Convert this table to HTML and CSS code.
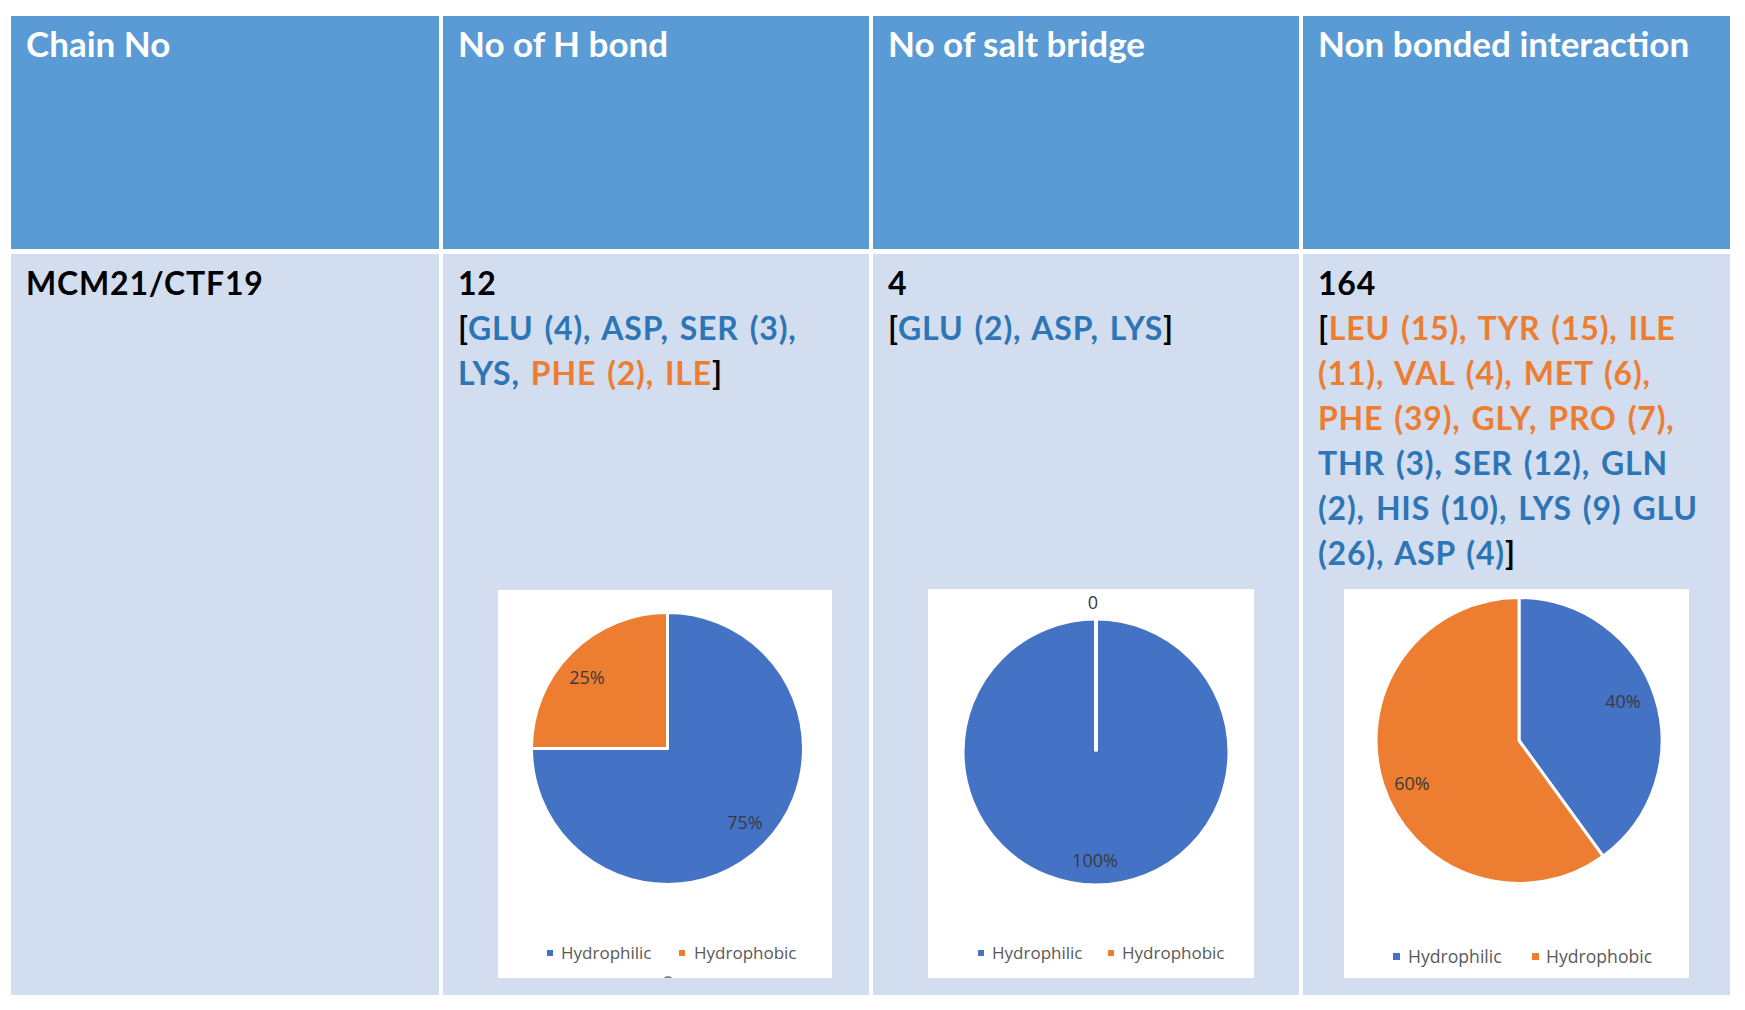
FILE: index.html
```html
<!DOCTYPE html>
<html lang="en">
<head>
<meta charset="utf-8">
<title>Chain interactions</title>
<link rel="stylesheet" href="styles.css">
</head>
<body>
<div class="table">
  <div class="cell head">Chain No</div>
  <div class="cell head">No of H bond</div>
  <div class="cell head">No of salt bridge</div>
  <div class="cell head">Non bonded interaction</div>

  <div class="cell body">
    <p class="cell-text">MCM21/CTF19</p>
  </div>

  <div class="cell body">
    <p class="cell-text">12<br>[<span class="philic">GLU (4), ASP, SER (3),</span><br><span class="philic">LYS,</span> <span class="phobic">PHE (2), ILE</span>]</p>
    <figure class="chart chart-hbond">
      <svg width="334" height="388" viewBox="0 0 334 388">
        <path class="slice-blue" d="M169.5 158.5 L169.5 22.5 A136 136 0 1 1 33.5 158.5 Z"/>
        <path class="slice-orange" d="M169.5 158.5 L33.5 158.5 A136 136 0 0 1 169.5 22.5 Z"/>
        <text class="label" x="89" y="94" text-anchor="middle">25%</text>
        <text class="label" x="247" y="239" text-anchor="middle">75%</text>
        <rect class="key-blue" x="49" y="360" width="6" height="6"/>
        <text class="legend" x="63" y="369">Hydrophilic</text>
        <rect class="key-orange" x="181" y="360" width="6" height="6"/>
        <text class="legend" x="196" y="369">Hydrophobic</text>
        <ellipse class="handle" cx="170" cy="390" rx="5" ry="4"/>
      </svg>
    </figure>
  </div>

  <div class="cell body">
    <p class="cell-text">4<br>[<span class="philic">GLU (2), ASP, LYS</span>]</p>
    <figure class="chart chart-salt">
      <svg width="326" height="389" viewBox="0 0 326 389">
        <circle class="slice-blue" cx="168" cy="163" r="133"/>
        <line class="gap-line" x1="168" y1="28" x2="168" y2="161"/>
        <text class="label" x="165" y="20" text-anchor="middle">0</text>
        <text class="label" x="167" y="278" text-anchor="middle">100%</text>
        <rect class="key-blue" x="50" y="361" width="6" height="6"/>
        <text class="legend" x="64" y="370">Hydrophilic</text>
        <rect class="key-orange" x="180" y="361" width="6" height="6"/>
        <text class="legend" x="194" y="370">Hydrophobic</text>
      </svg>
    </figure>
  </div>

  <div class="cell body">
    <p class="cell-text">164<br>[<span class="phobic">LEU (15), TYR (15), ILE</span><br><span class="phobic">(11), VAL (4), MET (6),</span><br><span class="phobic">PHE (39), GLY, PRO (7),</span><br><span class="philic">THR (3), SER (12), GLN</span><br><span class="philic">(2), HIS (10), LYS (9) GLU</span><br><span class="philic">(26), ASP (4)</span>]</p>
    <figure class="chart chart-nonbond">
      <svg width="345" height="389" viewBox="0 0 345 389">
        <path class="slice-blue" d="M175 151.5 L175 8.5 A143 143 0 0 1 259.05 267.19 Z"/>
        <path class="slice-orange" d="M175 151.5 L259.05 267.19 A143 143 0 1 1 175 8.5 Z"/>
        <text class="label" x="279" y="119" text-anchor="middle">40%</text>
        <text class="label" x="68" y="201" text-anchor="middle">60%</text>
        <rect class="key-blue" x="49" y="364" width="7" height="7"/>
        <text class="legend legend-lg" x="64" y="374">Hydrophilic</text>
        <rect class="key-orange" x="188" y="364" width="7" height="7"/>
        <text class="legend legend-lg" x="202" y="374">Hydrophobic</text>
      </svg>
    </figure>
  </div>
</div>
</body>
</html>
```

FILE: styles.css
```css
html, body {
  margin: 0;
  padding: 0;
  background: #ffffff;
}

.table {
  display: grid;
  grid-template-columns: 428px 426px 426px 427px;
  grid-template-rows: 233px 741px;
  column-gap: 4px;
  row-gap: 5px;
  padding: 16px 0 0 11px;
}

.cell {
  box-sizing: border-box;
  padding-left: 15px;
  padding-right: 8px;
  font-family: Lato, "Open Sans", sans-serif;
  font-weight: 700;
}

.head {
  background: #5b9bd5;
  color: #ffffff;
  font-size: 35px;
  line-height: 42px;
  padding-top: 6px;
}

.body {
  background: #d2deef;
  color: #000000;
  display: flex;
  flex-direction: column;
  font-size: 32px;
  line-height: 45px;
  letter-spacing: 0.8px;
  word-spacing: 2.5px;
  padding-top: 6px;
}

.cell-text {
  margin: 0;
  white-space: nowrap;
}

.philic {
  color: #2e75b6;
}

.phobic {
  color: #ed7d31;
}

.chart {
  margin: auto 0 17px 0;
  background: #ffffff;
  line-height: 0;
  letter-spacing: 0;
  word-spacing: 0;
}

.chart svg {
  display: block;
}

.chart-hbond {
  width: 334px;
  height: 388px;
  margin-left: 40px;
}

.chart-salt {
  width: 326px;
  height: 389px;
  margin-left: 40px;
}

.chart-nonbond {
  width: 345px;
  height: 389px;
  margin-left: 26px;
}

.slice-blue {
  fill: #4472c4;
  stroke: #ffffff;
  stroke-width: 3;
  stroke-linejoin: round;
}

.slice-orange {
  fill: #ed7d31;
  stroke: #ffffff;
  stroke-width: 3;
  stroke-linejoin: round;
}

.gap-line {
  stroke: #ffffff;
  stroke-width: 4;
  stroke-linecap: round;
}

.label {
  font-family: "Open Sans", "Noto Sans", sans-serif;
  font-size: 18px;
  font-weight: 400;
  fill: #3a3a3a;
}

.legend {
  font-family: "Open Sans", "Noto Sans", sans-serif;
  font-size: 17px;
  font-weight: 400;
  fill: #595959;
}

.legend-lg {
  font-size: 17.6px;
}

.key-blue {
  fill: #4472c4;
}

.key-orange {
  fill: #ed7d31;
}

.handle {
  fill: #8c8c8c;
}
```
